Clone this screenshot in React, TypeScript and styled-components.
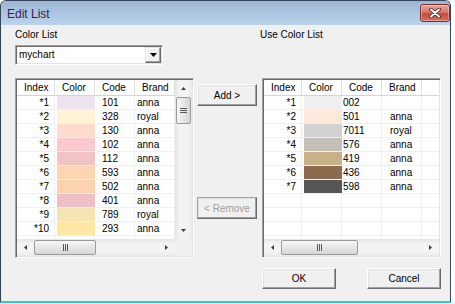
import React from 'react'
import styled, { createGlobalStyle } from 'styled-components'

type Row = { index: string; color: string; code: string; brand: string }

const colorList: Row[] = [
  { index: '*1', color: '#ede3f0', code: '101', brand: 'anna' },
  { index: '*2', color: '#fff5d6', code: '328', brand: 'royal' },
  { index: '*3', color: '#fddccd', code: '130', brand: 'anna' },
  { index: '*4', color: '#f9c9ce', code: '102', brand: 'anna' },
  { index: '*5', color: '#f2c2c5', code: '112', brand: 'anna' },
  { index: '*6', color: '#fdd5b3', code: '593', brand: 'anna' },
  { index: '*7', color: '#fdd3af', code: '502', brand: 'anna' },
  { index: '*8', color: '#efbfc7', code: '401', brand: 'anna' },
  { index: '*9', color: '#f5e3b1', code: '789', brand: 'royal' },
  { index: '*10', color: '#fee7a5', code: '293', brand: 'anna' },
]

const useList: Row[] = [
  { index: '*1', color: '#efefef', code: '002', brand: '' },
  { index: '*2', color: '#fde8da', code: '501', brand: 'anna' },
  { index: '*3', color: '#d2d2d2', code: '7011', brand: 'royal' },
  { index: '*4', color: '#c5bfba', code: '576', brand: 'anna' },
  { index: '*5', color: '#c8b189', code: '419', brand: 'anna' },
  { index: '*6', color: '#8b6a4d', code: '436', brand: 'anna' },
  { index: '*7', color: '#565656', code: '598', brand: 'anna' },
]

const headers = ['Index', 'Color', 'Code', 'Brand']

const Tri = ({ dir, w, h, color = '#000' }: { dir: 'up' | 'down' | 'left' | 'right'; w: number; h: number; color?: string }) => {
  const pts = {
    up: `0,${h} ${w},${h} ${w / 2},0`,
    down: `0,0 ${w},0 ${w / 2},${h}`,
    left: `${w},0 ${w},${h} 0,${h / 2}`,
    right: `0,0 0,${h} ${w},${h / 2}`,
  }[dir]
  return (
    <svg width={w} height={h} viewBox={`0 0 ${w} ${h}`}>
      <polygon points={pts} fill={color} />
    </svg>
  )
}

const Grip = ({ vertical }: { vertical?: boolean }) =>
  vertical ? (
    <svg width="7" height="7" viewBox="0 0 7 7">
      <path d="M0 1.5h7M0 3.5h7M0 5.5h7" stroke="#5a5a5a" strokeWidth="1" />
    </svg>
  ) : (
    <svg width="7" height="7" viewBox="0 0 7 7">
      <path d="M1.5 0v7M3.5 0v7M5.5 0v7" stroke="#5a5a5a" strokeWidth="1" />
    </svg>
  )

const ListView = ({
  rows,
  total,
  scroll,
  codePad,
  brandPad,
  thumb,
}: {
  rows: Row[]
  total: number
  scroll?: boolean
  codePad: number
  brandPad: number
  thumb: number
}) => {
  const blanks = Array.from({ length: total - rows.length })
  return (
    <ListFrame $scroll={scroll}>
      <Table>
        {headers.map((h) => (
          <HeadCell key={h}>{h}</HeadCell>
        ))}
        <HeadCell $filler />
        {rows.map((r) => (
          <React.Fragment key={r.index}>
            <Cell $right>{r.index}</Cell>
            <SwatchCell>
              <Swatch style={{ background: r.color }} />
            </SwatchCell>
            <Cell $pad={codePad}>{r.code}</Cell>
            <Cell $pad={brandPad}>{r.brand}</Cell>
            <Cell $filler />
          </React.Fragment>
        ))}
        {blanks.map((_, i) => (
          <React.Fragment key={'b' + i}>
            <Cell />
            <Cell />
            <Cell />
            <Cell />
            <Cell $filler />
          </React.Fragment>
        ))}
      </Table>
      {scroll && (
        <VScroll>
          <ArrowBox>
            <Tri dir="up" w={5} h={3} color="#3c3c3c" />
          </ArrowBox>
          <VThumb>
            <Grip vertical />
          </VThumb>
          <ArrowBox $end>
            <Tri dir="down" w={5} h={3} color="#3c3c3c" />
          </ArrowBox>
        </VScroll>
      )}
      <HScroll>
        <ArrowBox>
          <Tri dir="left" w={3} h={5} color="#3c3c3c" />
        </ArrowBox>
        <HThumb style={{ width: thumb }}>
          <Grip />
        </HThumb>
        <ArrowBox $end>
          <Tri dir="right" w={3} h={5} color="#3c3c3c" />
        </ArrowBox>
      </HScroll>
      {scroll && <Corner />}
    </ListFrame>
  )
}

const App = () => {
  return (
    <>
      <GlobalStyle />
      <Window>
        <TitleBar>
          <Title>Edit List</Title>
          <CloseButton>
            <svg width="12" height="10" viewBox="0 0 12 10">
              <path d="M2 1.5l8 7M10 1.5l-8 7" stroke="#4a2020" strokeWidth="3.6" strokeLinecap="round" />
              <path d="M2 1.5l8 7M10 1.5l-8 7" stroke="#fff" strokeWidth="2" strokeLinecap="round" />
            </svg>
          </CloseButton>
        </TitleBar>
        <Body>
          <Label>Color List</Label>
          <span />
          <Label $shift>Use Color List</Label>

          <Combo>
            <ComboText>mychart</ComboText>
            <ComboButton>
              <Tri dir="down" w={7} h={4} />
            </ComboButton>
          </Combo>
          <span />
          <span />

          <ListView rows={colorList} total={11} scroll codePad={7} brandPad={2} thumb={62} />
          <Middle>
            <Button>Add &gt;</Button>
            <Button $disabled>&lt; Remove</Button>
          </Middle>
          <ListView rows={useList} total={11} codePad={1} brandPad={8} thumb={77} />

          <Footer>
            <DialogButton>OK</DialogButton>
            <DialogButton>Cancel</DialogButton>
          </Footer>
        </Body>
      </Window>
    </>
  )
}

const GlobalStyle = createGlobalStyle`
  html, body {
    margin: 0;
    padding: 0;
    background: #ffffff;
  }
  body {
    font-family: "Liberation Sans", Arial, sans-serif;
    font-size: 10px;
    color: #000;
  }
`

const Window = styled.div`
  width: 451px;
  height: 303px;
  box-sizing: border-box;
  display: flex;
  flex-direction: column;
  background: #f0f0f0;
  border: 1px solid #34465a;
  border-bottom: 2px solid #3fc1d9;
  border-radius: 6px 6px 0 0;
  box-shadow: 0 1px 0 #2b3a4a, inset 1px 0 #dfe9f3;
  overflow: hidden;
`

const TitleBar = styled.div`
  height: 24px;
  flex: none;
  display: flex;
  align-items: flex-start;
  padding: 0 0 0 6px;
  background: linear-gradient(#9cb6d3, #bcd3ec);
`

const Title = styled.div`
  font-size: 12px;
  line-height: 14px;
  margin-top: 6px;
  color: #43184f;
`

const CloseButton = styled.div`
  margin-left: auto;
  margin-top: 3px;
  width: 30px;
  height: 18px;
  box-sizing: border-box;
  display: flex;
  align-items: center;
  justify-content: center;
  border: 1px solid #7a3026;
  border-radius: 3px;
  background: linear-gradient(#e8a597, #d8786a 45%, #c84a3a 55%, #d46e5e);
  box-shadow: inset 0 0 0 1px rgba(255, 255, 255, 0.35);
`

const Body = styled.div`
  flex: 1;
  display: grid;
  grid-template-columns: 179px 68px 179px;
  align-content: start;
  padding: 4px 0 0 14px;
`

const Label = styled.div<{ $shift?: boolean }>`
  line-height: 12px;
  margin-left: ${(p) => (p.$shift ? '-2px' : '0')};
`

const Combo = styled.div`
  width: 148px;
  height: 20px;
  box-sizing: border-box;
  margin-top: 4px;
  display: flex;
  align-items: center;
  padding: 1px 1px 1px 3px;
  background: #fff;
  border: 1px solid;
  border-color: #a0a0a0 #ffffff #ffffff #a0a0a0;
  box-shadow: inset 1px 1px #696969, inset -1px -1px #e3e3e3;
`

const ComboText = styled.span`
  flex: 1;
  line-height: 12px;
`

const ComboButton = styled.div`
  width: 16px;
  height: 16px;
  box-sizing: border-box;
  display: flex;
  align-items: center;
  justify-content: center;
  background: #f0f0f0;
  border: 1px solid;
  border-color: #e3e3e3 #696969 #696969 #e3e3e3;
  box-shadow: inset -1px -1px #a0a0a0, inset 1px 1px #ffffff;
`

const ListFrame = styled.div<{ $scroll?: boolean }>`
  width: 179px;
  height: 180px;
  box-sizing: border-box;
  margin-top: 13px;
  padding: 1px;
  background: #fff;
  border: 1px solid;
  border-color: #a0a0a0 #ffffff #ffffff #a0a0a0;
  box-shadow: inset 1px 1px #696969, inset -1px -1px #e3e3e3;
  display: grid;
  grid-template-columns: ${(p) => (p.$scroll ? '1fr 17px' : '1fr')};
  grid-template-rows: 1fr 17px;
`

const Table = styled.div`
  overflow: hidden;
  display: grid;
  grid-template-columns: 38px 40px 40px 40px 1fr;
  grid-template-rows: 16px;
  grid-auto-rows: 14px;
  align-content: start;
  min-width: 0;
  min-height: 0;
`

const HeadCell = styled.div<{ $filler?: boolean }>`
  box-sizing: border-box;
  padding-left: 7px;
  line-height: 15px;
  white-space: nowrap;
  overflow: hidden;
  background: #fff;
  border-bottom: 1px solid #d5d5d5;
  border-right: ${(p) => (p.$filler ? 'none' : '1px solid #dedede')};
`

const Cell = styled.div<{ $right?: boolean; $pad?: number; $filler?: boolean }>`
  box-sizing: border-box;
  padding-top: 1px;
  line-height: 12px;
  white-space: nowrap;
  overflow: hidden;
  text-align: ${(p) => (p.$right ? 'right' : 'left')};
  padding-right: ${(p) => (p.$right ? '5px' : '0')};
  padding-left: ${(p) => p.$pad ?? 0}px;
  border-bottom: 1px solid #f0f0f0;
  border-right: ${(p) => (p.$filler ? 'none' : '1px solid #f0f0f0')};
`

const SwatchCell = styled.div`
  box-sizing: border-box;
  padding-left: 2px;
  border-bottom: 1px solid #f0f0f0;
  display: flex;
`

const Swatch = styled.div`
  flex: 1;
`

const VScroll = styled.div`
  display: flex;
  flex-direction: column;
  min-height: 0;
  background: linear-gradient(90deg, #e4e4e4, #f3f3f3 25%, #f3f3f3 75%, #e9e9e9);
`

const HScroll = styled.div`
  display: flex;
  min-width: 0;
  background: linear-gradient(#e4e4e4, #f3f3f3 25%, #f3f3f3 75%, #e9e9e9);
`

const ArrowBox = styled.div<{ $end?: boolean }>`
  width: 17px;
  height: 17px;
  flex: none;
  display: flex;
  align-items: center;
  justify-content: center;
  margin-left: ${(p) => (p.$end ? 'auto' : '0')};
  margin-top: ${(p) => (p.$end ? 'auto' : '0')};
`

const VThumb = styled.div`
  width: 15px;
  height: 27px;
  margin: 0 1px;
  box-sizing: border-box;
  border: 1px solid #9a9a9a;
  border-radius: 2px;
  background: linear-gradient(90deg, #f6f6f6, #e6e6e6 50%, #d6d6d6);
  display: flex;
  align-items: center;
  justify-content: center;
`

const HThumb = styled.div`
  height: 15px;
  margin: 1px 0;
  box-sizing: border-box;
  flex: none;
  border: 1px solid #9a9a9a;
  border-radius: 2px;
  background: linear-gradient(#f6f6f6, #e6e6e6 50%, #d6d6d6);
  display: flex;
  align-items: center;
  justify-content: center;
`

const Corner = styled.div`
  background: #f0f0f0;
`

const Middle = styled.div`
  display: flex;
  flex-direction: column;
  gap: 91px;
  padding: 19px 0 0 3px;
`

const Button = styled.button<{ $disabled?: boolean }>`
  width: 60px;
  height: 22px;
  padding: 0;
  box-sizing: border-box;
  font: 10px "Liberation Sans", Arial, sans-serif;
  color: ${(p) => (p.$disabled ? '#a0a0a0' : '#000')};
  background: #f0f0f0;
  border: 1px solid;
  border-color: ${(p) =>
    p.$disabled ? '#a0a0a0 #696969 #696969 #a0a0a0' : '#ffffff #696969 #696969 #ffffff'};
  box-shadow: inset -1px -1px #a0a0a0, inset 1px 1px #e3e3e3;
`

const DialogButton = styled(Button)`
  width: 74px;
  height: 21px;
`

const Footer = styled.div`
  grid-column: 3;
  display: flex;
  justify-content: space-between;
  margin-top: 10px;
`

export default App
